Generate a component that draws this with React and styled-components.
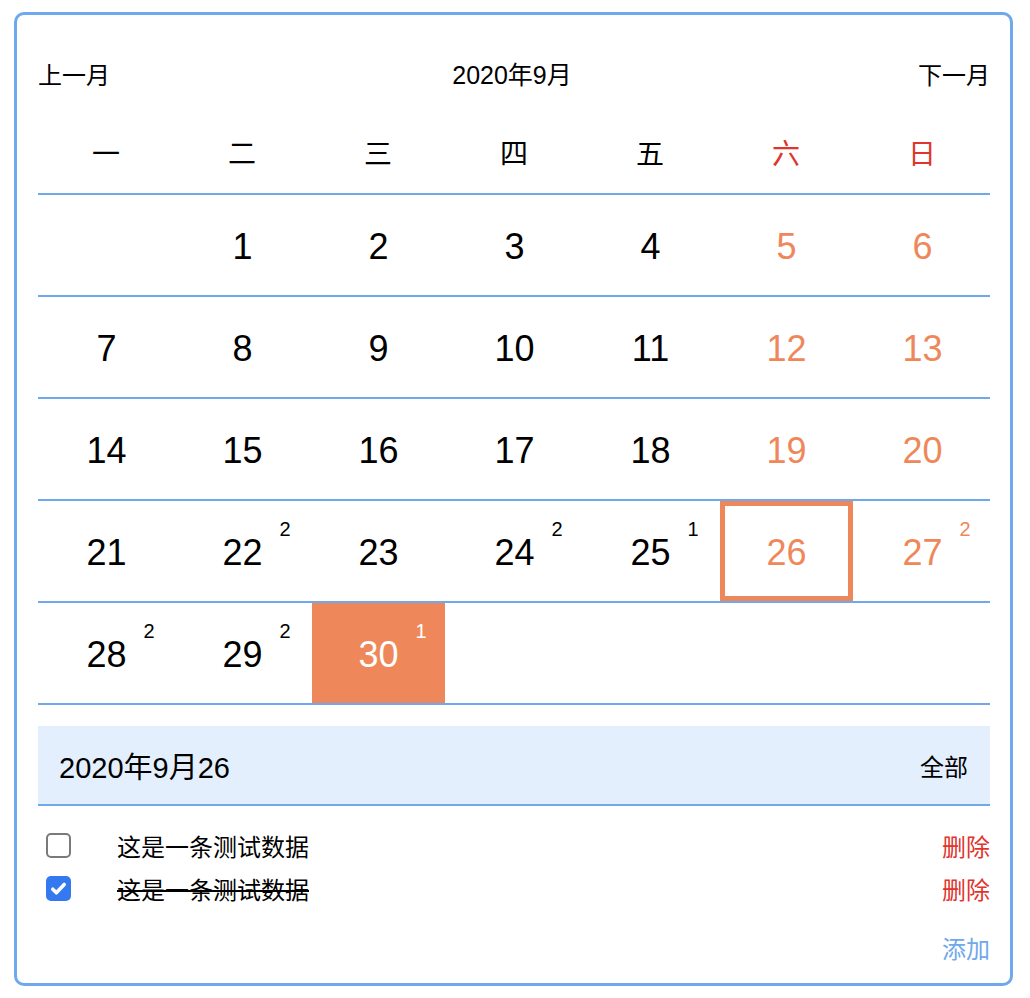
import React, { useState } from 'react'
import styled, { createGlobalStyle, css } from 'styled-components'

const BLUE = '#6fa8ec'
const ORANGE = '#ee885b'
const RED = '#e0342c'

const GlobalStyle = createGlobalStyle`
    html, body {
        margin: 0;
        padding: 0;
        background: #fff;
    }
    body {
        font-family: "Liberation Sans", "Noto Sans CJK SC", sans-serif;
        color: #000;
    }
`

const Page = styled.div`
    padding: 12px 0 0 14px;
`

const Card = styled.div`
    box-sizing: border-box;
    width: 999px;
    border: 3px solid ${BLUE};
    border-radius: 10px;
    padding: 20px 20px 21px 21px;
`

const Header = styled.div`
    display: flex;
    align-items: center;
    justify-content: space-between;
    height: 76px;
    font-size: 24px;
    span {
        cursor: pointer;
    }
    .title {
        font-size: 25px;
        margin-left: -4px;
    }
`

const Week = styled.div`
    display: grid;
    grid-template-columns: repeat(7, 1fr);
    height: 82px;
    border-bottom: 2px solid ${BLUE};
`

const WeekDay = styled.div`
    display: flex;
    align-items: center;
    justify-content: center;
    font-size: 28px;
    color: ${p => (p.$weekend ? RED : '#000')};
`

const Row = styled.div`
    display: grid;
    grid-template-columns: repeat(7, 1fr);
    height: 100px;
    border-bottom: 2px solid ${BLUE};
`

const Cell = styled.div`
    box-sizing: border-box;
    margin: 0 1px 0 2px;
    display: flex;
    align-items: center;
    justify-content: center;
    cursor: pointer;
    color: ${p => (p.$weekend ? ORANGE : '#000')};
    ${p => p.$selected && css`
        border: 5px solid ${ORANGE};
    `}
    ${p => p.$today && css`
        background: ${ORANGE};
        color: #fff;
    `}
`

const Num = styled.span`
    position: relative;
    font-size: 36px;
    line-height: 1;
    margin-top: 3px;
`

const Badge = styled.span`
    position: absolute;
    left: 100%;
    top: -16px;
    margin-left: 17px;
    font-size: 20px;
    line-height: 1;
`

const Detail = styled.div`
    display: flex;
    align-items: center;
    justify-content: space-between;
    margin-top: 21px;
    height: 78px;
    padding: 0 22px 0 21px;
    background: #e3effd;
    border-bottom: 2px solid ${BLUE};
    b {
        font-weight: normal;
        font-size: 29px;
    }
    span {
        font-size: 24px;
        cursor: pointer;
    }
`

const TodoList = styled.div`
    margin-top: 18px;
`

const TodoItem = styled.div`
    display: flex;
    align-items: center;
    height: 43px;
    font-size: 24px;
`

const Check = styled.span`
    box-sizing: border-box;
    width: 25px;
    height: 25px;
    margin-left: 8px;
    border-radius: 5px;
    display: flex;
    align-items: center;
    justify-content: center;
    cursor: pointer;
    border: ${p => (p.$checked ? 'none' : '2px solid #7a7a7a')};
    background: ${p => (p.$checked ? '#3479f0' : '#fff')};
`

const TodoText = styled.span`
    margin-left: 46px;
    text-decoration: ${p => (p.$done ? 'line-through' : 'none')};
`

const Delete = styled.span`
    margin-left: auto;
    color: ${RED};
    cursor: pointer;
`

const Add = styled.div`
    margin-top: 22px;
    height: 30px;
    display: flex;
    align-items: center;
    justify-content: flex-end;
    font-size: 24px;
    color: ${BLUE};
    span {
        cursor: pointer;
    }
`

const weekNames = ['一', '二', '三', '四', '五', '六', '日']
const counts = { 22: 2, 24: 2, 25: 1, 27: 2, 28: 2, 29: 2, 30: 1 }

function buildRows() {
    // 2020-09-01 是周二
    const cells = [null]
    for (let d = 1; d <= 30; d++) cells.push(d)
    while (cells.length % 7) cells.push(null)
    const rows = []
    for (let i = 0; i < cells.length; i += 7) rows.push(cells.slice(i, i + 7))
    return rows
}

export default function App() {
    const [selected, setSelected] = useState(26)
    const [todos, setTodos] = useState([
        { id: 1, text: '这是一条测试数据', done: false },
        { id: 2, text: '这是一条测试数据', done: true },
    ])
    const rows = buildRows()
    function toggle(id) {
        setTodos(todos.map(t => (t.id === id ? { ...t, done: !t.done } : t)))
    }
    function remove(id) {
        setTodos(todos.filter(t => t.id !== id))
    }
    return (
        <Page>
            <GlobalStyle />
            <Card>
                <Header>
                    <span>上一月</span>
                    <span className="title">2020年9月</span>
                    <span>下一月</span>
                </Header>
                <Week>
                    {weekNames.map((w, i) => (
                        <WeekDay key={w} $weekend={i > 4}>{w}</WeekDay>
                    ))}
                </Week>
                {rows.map((row, r) => (
                    <Row key={r}>
                        {row.map((d, i) => d ? (
                            <Cell
                                key={i}
                                $weekend={i > 4}
                                $selected={d === selected}
                                $today={d === 30}
                                onClick={() => setSelected(d)}
                            >
                                <Num>
                                    {d}
                                    {counts[d] && <Badge>{counts[d]}</Badge>}
                                </Num>
                            </Cell>
                        ) : <div key={i}></div>)}
                    </Row>
                ))}
                <Detail>
                    <b>2020年9月{selected}</b>
                    <span>全部</span>
                </Detail>
                <TodoList>
                    {todos.map(t => (
                        <TodoItem key={t.id}>
                            <Check $checked={t.done} onClick={() => toggle(t.id)}>
                                {t.done && (
                                    <svg width="19" height="19" viewBox="0 0 16 16">
                                        <path d="M3.2 8.6l3 3L12.8 4.6" fill="none" stroke="#fff" strokeWidth="3" strokeLinecap="round" strokeLinejoin="round" />
                                    </svg>
                                )}
                            </Check>
                            <TodoText $done={t.done}>{t.text}</TodoText>
                            <Delete onClick={() => remove(t.id)}>删除</Delete>
                        </TodoItem>
                    ))}
                </TodoList>
                <Add><span>添加</span></Add>
            </Card>
        </Page>
    )
}
